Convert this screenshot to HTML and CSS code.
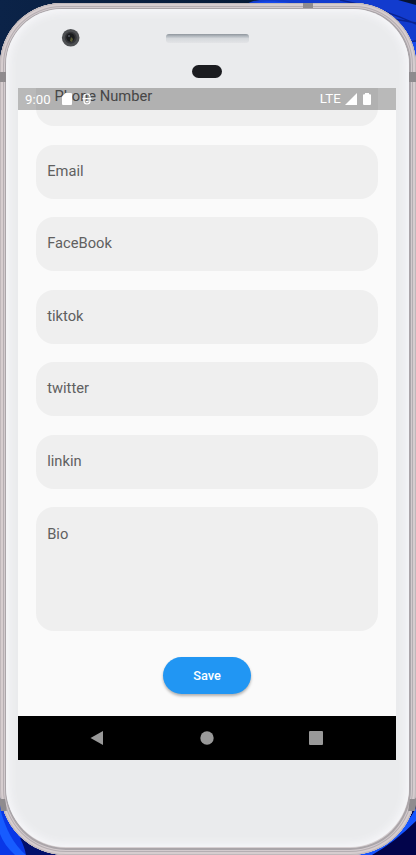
FILE: index.html
```html
<!DOCTYPE html>
<html lang="en">
<head>
<meta charset="utf-8">
<title>Profile form</title>
<link rel="stylesheet" href="styles.css">
</head>
<body>
<svg class="wallpaper" viewBox="0 0 416 855" aria-hidden="true">
  <defs>
    <linearGradient id="navy" x2="1" y2="0"><stop offset="0" stop-color="#0b2348"/><stop offset="1" stop-color="#03152d"/></linearGradient>
  </defs>
  <rect width="416" height="855" fill="url(#navy)"/>
  <path d="M245 5C253 0 258 0 267 0H416V70H245Z" fill="#123bce"/>
  <path d="M252 3C265 1 275 1 290 3L340 8L390 25L416 42V60L340 18Z" fill="#1749ed"/>
  <path d="M340 0Q385 9 416 24M378 17Q395 19 416 23M392 39Q402 42 416 41" fill="none" stroke="#0a2390" stroke-width="1.4"/>
  <path d="M398 0H416V5Z" fill="#071331"/>
  <path d="M0 800H70V855H0Z" fill="#0938e7"/>
  <path d="M0 808Q8 840 26 855H15Q4 845 0 834Z" fill="#175cff"/>
  <path d="M20 838Q25 848 26 855H65V845Z" fill="#02106c"/>
  <path d="M350 800H416V855H350Z" fill="#02044b"/>
  <path d="M416 808V821Q395 842 372 855H350V846Q400 840 416 808Z" fill="#1554ff"/>
</svg>
<main class="phone">
  <i class="seam seam-top"></i><i class="seam seam-left"></i><i class="seam seam-right"></i><i class="seam seam-bl"></i><i class="seam seam-br"></i>
  <div class="face">
    <header class="bezel">
      <svg width="378" height="79" viewBox="18 9 378 79" aria-hidden="true">
        <defs><linearGradient id="speaker" x2="0" y2="1"><stop offset="0" stop-color="#8f969d"/><stop offset=".28" stop-color="#b7bdc3"/><stop offset=".5" stop-color="#d5d8dc"/><stop offset="1" stop-color="#e3e4e7"/></linearGradient></defs>
        <circle cx="70.7" cy="37.7" r="8.8" fill="#4e5053"/>
        <circle cx="70.7" cy="37.7" r="6" fill="#343539"/>
        <circle cx="70.5" cy="37.5" r="4.2" fill="#191b1d"/>
        <circle cx="69" cy="36" r="1.1" fill="#51545d"/>
        <path d="M71 37L73 39L72 42L70 41Z" fill="#5a5b35"/>
        <rect x="166" y="34" width="83" height="9" rx="3" fill="url(#speaker)"/>
        <rect x="192" y="65" width="30" height="13" rx="6.5" fill="#1b1c20"/>
      </svg>
    </header>
    <section class="screen">
      <div class="status">
        <span class="time">9:00</span>
        <svg class="card-icon" width="10" height="12" viewBox="0 0 10 12"><path d="M3.5 0H9Q10 0 10 1V11Q10 12 9 12H1Q0 12 0 11V3.5Z" fill="#fff"/></svg>
        <svg class="debug-icon" width="10" height="12" viewBox="0 0 10 12"><path d="M2 5V4Q2 1 5 1T8 4V5M2 6V8Q2 11 5 11T8 8V6M.5 5.6H9.5M4 8.3H6.5" fill="none" stroke="#fff" stroke-width="1.2"/></svg>
        <span class="network">LTE</span>
        <svg class="signal" width="12" height="12" viewBox="0 0 12 12"><path d="M12 0V12H0Z" fill="#fff"/></svg>
        <svg class="battery" width="8" height="12" viewBox="0 0 8 12"><path d="M2 0H6V1.2H7Q8 1.2 8 2.2V11Q8 12 7 12H1Q0 12 0 11V2.2Q0 1.2 1 1.2H2Z" fill="#fff"/></svg>
      </div>
      <form class="form">
        <div class="field phone-field"><span>Phone Number</span></div>
        <div class="field">Email</div>
        <div class="field">FaceBook</div>
        <div class="field">tiktok</div>
        <div class="field">twitter</div>
        <div class="field">linkin</div>
        <div class="field bio">Bio</div>
        <button class="save" type="button">Save</button>
      </form>
      <nav class="navbar">
        <svg width="14" height="16" viewBox="0 0 14 16"><path d="M13 1V15L.5 8Z" fill="#999"/></svg>
        <svg width="14" height="16" viewBox="0 0 14 16"><circle cx="7" cy="8" r="6.7" fill="#999"/></svg>
        <svg width="14" height="16" viewBox="0 0 14 16"><rect y="1" width="14" height="14" rx="1" fill="#999"/></svg>
      </nav>
    </section>
  </div>
</main>
</body>
</html>
```
FILE: styles.css
```css
* { box-sizing: border-box; }
body { margin: 0; width: 416px; height: 855px; overflow: hidden; position: relative; font-family: Roboto, sans-serif; }
.wallpaper { position: absolute; inset: 0; width: 416px; height: 855px; }
.phone {
  position: relative; width: 416px; height: 852px; margin-top: 3px; padding: 6px 7px 8px 6px;
  border-radius: 62px 62px 66px 66px; background: #d7d0d2;
  box-shadow: inset 0 0 0 1px #c0b8bb, inset 0 0 0 3px #d6cdcf, inset 0 0 0 4px #b5aeb2, inset 0 0 0 5px #d3cbce, inset 0 0 0 7px #aaa5a9;
}
.face {
  width: 403px; height: 838px; padding: 0 13px 0 12px; border-radius: 56px 56px 60px 60px; background: #eaebed;
  box-shadow: inset 0 0 9px 3px #f7f7fa;
}
.seam { position: absolute; background: #8f8b8e; }
.seam-top { left: 303px; top: 0; width: 10px; height: 5px; }
.seam-left { left: 0; top: 69px; width: 6px; height: 10px; }
.seam-right { right: 0; top: 69px; width: 7px; height: 10px; }
.seam-bl { left: 0; top: 796px; width: 6px; height: 12px; transform: skewX(8deg); }
.seam-br { right: 0; top: 796px; width: 7px; height: 12px; transform: skewX(-8deg); }
.bezel { height: 79px; }
.bezel svg { display: block; }
.screen { position: relative; width: 378px; height: 672px; background: #fafafa; overflow: hidden; display: flex; flex-direction: column; }
.status { position: absolute; z-index: 2; inset: 0 0 auto; height: 22px; background: rgba(0, 0, 0, .26); display: flex; align-items: center; padding: 0 25px 0 7px; color: #fff; line-height: 22px; }
.time { width: 37px; padding-top: 1px; font-size: 13.2px; letter-spacing: .1px; }
.card-icon { margin-right: 10px; }
.network { margin-left: auto; font-size: 13.3px; letter-spacing: .1px; }
.signal { margin-left: 4px; }
.battery { margin-left: 6px; }
.form { height: 628px; padding: 0 18px; display: flex; flex-direction: column; align-items: center; }
.field { flex: none; width: 342px; height: 54px; margin-bottom: 18.5px; padding: 0 11.2px; border-radius: 18px; background: #efefef; color: #606060; font-size: 14.7px; line-height: 53.4px; }
.phone-field { margin-top: -15.8px; padding-left: 18.5px; line-height: 49.4px; }
.bio { height: 124px; margin-bottom: 25.8px; line-height: 54.4px; }
.save { width: 88px; height: 37px; flex: none; border: 0; border-radius: 19px; background: #2196f3; color: #fff; font: 500 12.8px/37px Roboto, sans-serif; padding: 0; box-shadow: 0 2px 3px rgba(0, 0, 0, .3); }
.navbar { height: 44px; background: #000; display: flex; align-items: center; justify-content: space-between; padding: 0 73px 0 72px; }
```
